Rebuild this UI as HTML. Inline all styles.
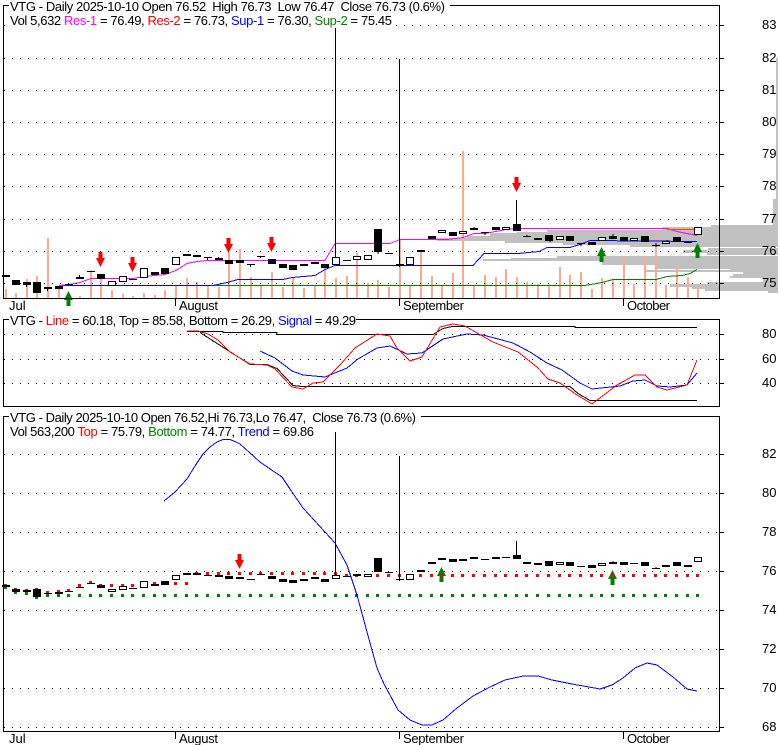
<!DOCTYPE html>
<html><head><meta charset="utf-8"><title>VTG</title>
<style>html,body{margin:0;padding:0;background:#fff}svg{display:block}text{font-family:"Liberation Sans",Arial,sans-serif;font-size:13px;fill:#000;white-space:pre}</style>
</head><body>
<svg xmlns="http://www.w3.org/2000/svg" width="780" height="745" viewBox="0 0 780 745" shape-rendering="crispEdges">
<rect width="780" height="745" fill="#fff"/>
<!-- volume profile -->
<path fill="#c0c0c0" d="M776 58h2v141h-2zM773 199h5v26h-5zM711 225h67v2h-67zM662 227h116v3H662zM547 230h231v2H547zM517 232h261v1H517zM490 233h288v3H490zM467 236h311v2H467zM437 238h341v3H437zM505 241h273v2H505zM563 243h215v2H563zM630 245h148v2H630zM708 248h70v2h-70zM683 250h95v3h-95zM707 253h71v2h-71zM557 256h221v2H557zM511 258h267v1H511zM483 259h295v2H483zM602 261h176v4H602zM657 265h121v4H657zM730 269h48v1h-48zM646 270h132v2H646zM743 272h35v2h-35zM733 274h45v2h-45zM730 276h48v2h-48zM763 278h15v4h-15zM707 282h71v2h-71zM670 284h108v3H670zM692 287h86v2h-86zM705 289h73v2h-73zM768 291h10v2h-10z"/>
<!-- volume bars -->
<path stroke="#ffaa90" stroke-width="2" fill="none" d="M6 289V298M16 293V298M27 279V298M37 276V298M48 238V298M59 286V298M80 296V298M91 270V298M101 279V298M112 290V298M123 294V298M133 296V298M144 293V298M155 295V298M165 290V298M176 286V298M187 278V298M197 282V298M208 285V298M219 287V298M229 252V298M240 249V298M251 277V298M261 285V298M272 272V298M283 287V298M293 278V298M304 288V298M315 285V298M325 267V298M336 278V298M347 276V298M357 253V298M368 283V298M378 280V298M389 287V298M400 240V298M410 286V298M421 252V298M432 276V298M442 285V298M453 273V298M463 151V298M474 285V298M485 275V298M496 277V298M506 269V298M517 277V298M527 282V298M538 284V298M549 284V298M560 267V298M570 275V298M581 272V298M592 289V298M602 278V298M613 279V298M624 257V298M634 284V298M645 256V298M656 234V298M666 285V298M677 266V298M688 277V298M698 287V298"/>
<!-- grid -->
<path stroke="#000" stroke-width="1" stroke-dasharray="1 7" fill="none" d="M4 25.5H717M4 58.5H717M4 90.5H717M4 122.5H717M4 154.5H717M4 186.5H717M4 219.5H717M4 251.5H717M4 283.5H717M4 334.5H717M4 359.5H717M4 383.5H717M4 454.5H717M4 493.5H717M4 532.5H717M4 571.5H717M4 610.5H717M4 649.5H717M4 688.5H717M4 727.5H717"/>
<path stroke="#000" stroke-width="1" fill="none" d="M720 25.5h4M720 58.5h4M720 90.5h4M720 122.5h4M720 154.5h4M720 186.5h4M720 219.5h4M720 251.5h4M720 283.5h4M720 334.5h4M720 359.5h4M720 383.5h4M720 454.5h4M720 493.5h4M720 532.5h4M720 571.5h4M720 610.5h4M720 649.5h4M720 688.5h4M720 727.5h4"/>
<!-- lines panel 1 -->
<polyline fill="none" stroke="#008000" points="59,285.500 585,285.500 602,282.5 613,279.5 656,279.5 667,276.5 682,275.5 690,273.5 697,269.5"/>
<polyline fill="none" stroke="#0000ff" points="59,285.5 213,285.5 227,282.5 238,279.5 283,279.5 292,277.5 315,275.5 325,269.5 335,265.5 473,265.5 484,253.5 518,253.5 539,251.5 547,247.5 570,247.5 580,244.5 590,240.5 697,241.5"/>
<polyline fill="none" stroke="#ff00ff" points="59,285.5 69,284.5 80,282.5 91,278.5 133,278.5 144,276.5 165,274.5 176,270.5 187,263.5 197,261.5 207,260.5 325,260.5 335,243.5 390,243.5 400,239.5 447,239.5 463,237.5 474,233.5 485,233.5 506,229.5 517,228.5 667,228.5 677,231.5 697,235.5"/>
<path stroke="#ff4000" fill="none" d="M667 229.5H694"/>
<!-- candles panel 1 -->
<path stroke="#000" fill="none" d="M26.5 285v2M47.5 289v2M79.5 275v2M207.5 258v2M218.5 257v1M250.5 265v2M260.5 257v1M335.5 28V257M378 252v2M399.5 59V267M516.5 200V224M527 235v1M550 241v1M581 244v2M485 233v2M474 227v1M613 234v2M656 243v4M667 240v1"/>
<path fill="#000" d="M2 275h8v2H2zM12 280h8v5h-8zM23 282h8v3h-8zM33 282h8v11h-8zM44 287h8v2h-8zM55 286h8v3h-8zM65 284h8v1h-8zM76 277h8v2h-8zM87 271h8v1h-8zM97 274h8v5h-8zM129 279h8v1h-8zM151 272h8v3h-8zM161 268h8v6h-8zM183 254h8v2h-8zM193 255h8v2h-8zM204 257h8v1h-8zM215 258h8v2h-8zM225 260h8v4h-8zM236 260h8v3h-8zM247 264h8v1h-8zM257 256h8v1h-8zM268 259h8v5h-8zM279 264h8v4h-8zM289 265h8v5h-8zM300 264h8v2h-8zM311 262h8v2h-8zM321 264h8v4h-8zM343 260h8v1h-8zM374 229h8v23h-8zM385 253h8v1h-8zM396 264h8v2h-8zM417 250h8v2h-8zM428 236h8v3h-8zM449 232h8v4h-8zM470 228h8v2h-8zM481 232h8v1h-8zM492 227h8v3h-8zM513 224h8v7h-8zM523 236h8v1h-8zM534 238h8v2h-8zM545 235h8v6h-8zM566 236h8v5h-8zM577 243h8v1h-8zM588 242h8v3h-8zM609 236h8v3h-8zM620 237h8v4h-8zM641 236h8v6h-8zM652 245h8v1h-8zM673 237h8v5h-8zM684 242h8v1h-8z"/>
<path fill="#fff" stroke="#000" d="M108.5 281.5h7v4h-7zM119.5 276.5h7v5h-7zM140.5 268.5h7v9h-7zM172.5 257.5h7v7h-7zM332.5 257.5h7v7h-7zM353.5 256.5h7v3h-7zM364.5 255.5h7v4h-7zM406.5 257.5h7v7h-7zM438.5 230.5h7v2h-7zM459.5 231.5h7v2h-7zM502.5 227.5h7v2h-7zM556.5 236.5h7v3h-7zM598.5 237.5h7v3h-7zM630.5 238.5h7v2h-7zM662.5 241.5h7v2h-7zM694.5 227.5h7v7h-7z"/>
<!-- arrows -->
<path fill="#ff0000" d="M98.500 252h4v6h2.500L100.500 267L96 258h2.500zM130.500 257h4v6h2.500L132.500 272L128 263h2.500zM226.500 238h4v6h2.500L228.500 253L224 244h2.500zM269.500 237h4v6h2.500L271.500 252L267 243h2.500zM514.500 177h4v6h2.500L516.500 192L512 183h2.500zM237.500 554h4v6h2.500L239.500 569L235 560h2.500z"/>
<path fill="#008000" d="M68.500 291L73 300h-2.500v6h-4v-6H64zM601.500 247L606 256h-2.500v6h-4v-6H597zM697.500 243L702 252h-2.500v6h-4v-6H693zM441.500 567L446 576h-2.500v6h-4v-6H437zM612.500 570L617 579h-2.500v6h-4v-6H608z"/>
<!-- panel 2 lines -->
<polyline fill="none" stroke="#000" points="187,331.5 223,331.5 223,332.5 277,332.500 277,334.500 433,334.500 443,328.500 452,326.500 575,326.500 575,327.500 697,327.500"/>
<polyline fill="none" stroke="#000" points="200,332.500 250,364.500 267,364.500 277,368.500 293,385.500 302,386.500 570,386.500 578,393.500 590,400.500 697,400.500"/>
<polyline fill="none" stroke="#0000ff" points="260,351 275,358 292,371 303,375 325,377 347,368 358,359 377,348 390,346 407,354 422,353 443,339 467,334 483,335 513,343 530,352 547,363 562,370 580,383 592,389 620,386 633,381 645,380 657,386 670,387 687,385 697,373"/>
<polyline fill="none" stroke="#ff0000" points="187,331 198,331 208,334 218,340 230,352 250,364 267,365 275,369 292,387 303,389 313,383 323,382 340,365 355,348 377,334 390,336 397,348 410,361 422,357 440,327 453,324 465,326 493,342 518,352 537,367 548,379 560,383 577,395 592,404 617,385 635,375 645,375 657,387 667,390 687,385 697,360"/>
<!-- panel 3 top/bottom dots -->
<path stroke="#ff0000" stroke-width="3" fill="none" d="M4 585.500h3M14 589.500h3M25 590.500h3M35 589.500h3M46 592.500h3M57 591.500h3M67 590.500h3M78 585.500h3M89 582.500h3M99 585.500h3M110 585.500h3M121 585.500h3M131 585.500h3M153 583.500h3M174 583.500h3M185 583.500h3M195 573.500h3M206 573.500h3M217 573.500h3M227 573.500h3M238 573.500h3M249 573.500h3M259 573.500h3M270 573.500h3M281 573.500h3M291 573.500h3M302 573.500h3M313 573.500h3M323 573.500h3M334 573.500h3M345 575.500h3M355 575.500h3M366 575.500h3M376 575.500h3M387 575.500h3M398 575.500h3M408 575.500h3M419 575.500h3M430 575.500h3M440 575.500h3M451 575.500h3M461 575.500h3M472 575.500h3M483 575.500h3M494 575.500h3M504 575.500h3M515 575.500h3M525 575.500h3M536 575.500h3M547 575.500h3M558 575.500h3M568 575.500h3M579 575.500h3M590 575.500h3M600 575.500h3M611 575.500h3M622 575.500h3M632 575.500h3M643 575.500h3M654 575.500h3M664 575.500h3M675 575.500h3M686 575.500h3M696 575.500h3"/>
<path stroke="#008000" stroke-width="3" fill="none" d="M4 587.500h3M14 592.500h3M25 593.500h3M35 597.500h3M46 595.500h3M57 595.500h3M67 595.500h3M78 595.500h3M89 595.500h3M99 595.500h3M110 595.500h3M121 595.500h3M131 595.500h3M142 595.500h3M153 595.500h3M163 595.500h3M174 595.500h3M185 595.500h3M195 595.500h3M206 595.500h3M217 595.500h3M227 595.500h3M238 595.500h3M249 595.500h3M259 595.500h3M270 595.500h3M281 595.500h3M291 595.500h3M302 595.500h3M313 595.500h3M323 595.500h3M334 595.500h3M345 595.500h3M355 595.500h3M366 595.500h3M376 595.500h3M387 595.500h3M398 595.500h3M408 595.500h3M419 595.500h3M430 595.500h3M440 595.500h3M451 595.500h3M461 595.500h3M472 595.500h3M483 595.500h3M494 595.500h3M504 595.500h3M515 595.500h3M525 595.500h3M536 595.500h3M547 595.500h3M558 595.500h3M568 595.500h3M579 595.500h3M590 595.500h3M600 595.500h3M611 595.500h3M622 595.500h3M632 595.500h3M643 595.500h3M654 595.500h3M664 595.500h3M675 595.500h3M686 595.500h3M696 595.500h3"/>
<!-- panel 3 candles -->
<path stroke="#000" fill="none" d="M335.500 432V575M399.500 456V581M516.500 541V555M656 567v2M613 561v1"/>
<path fill="#000" d="M2 585h8v2H2zM12 589h8v3h-8zM23 590h8v2h-8zM33 589h8v8h-8zM44 593h8v1h-8zM55 592h8v2h-8zM65 591h8v1h-8zM76 587h8v1h-8zM87 583h8v1h-8zM97 585h8v3h-8zM129 588h8v1h-8zM151 584h8v2h-8zM161 581h8v4h-8zM183 573h8v2h-8zM193 573h8v2h-8zM204 575h8v1h-8zM215 575h8v2h-8zM225 576h8v3h-8zM236 577h8v2h-8zM247 579h8v1h-8zM257 574h8v1h-8zM268 576h8v3h-8zM279 579h8v3h-8zM289 580h8v3h-8zM300 579h8v2h-8zM311 577h8v2h-8zM321 579h8v3h-8zM343 576h8v1h-8zM353 574h8v2h-8zM374 558h8v14h-8zM385 572h8v1h-8zM396 579h8v1h-8zM417 570h8v2h-8zM428 562h8v2h-8zM438 558h8v2h-8zM449 559h8v3h-8zM459 559h8v2h-8zM470 557h8v2h-8zM481 559h8v1h-8zM492 557h8v2h-8zM502 557h8v1h-8zM513 555h8v4h-8zM523 562h8v2h-8zM534 563h8v2h-8zM545 561h8v5h-8zM566 562h8v4h-8zM577 566h8v1h-8zM588 565h8v3h-8zM609 562h8v2h-8zM620 562h8v3h-8zM630 563h8v1h-8zM641 562h8v4h-8zM652 568h8v1h-8zM662 565h8v2h-8zM673 562h8v4h-8zM684 565h8v2h-8z"/>
<path fill="#fff" stroke="#000" d="M108.500 589.500h7v2h-7zM119.500 586.500h7v3h-7zM140.500 581.500h7v6h-7zM172.500 575.500h7v4h-7zM332.500 575.500h7v3h-7zM364.500 574.500h7v2h-7zM406.500 574.500h7v5h-7zM556.500 562.500h7v2h-7zM598.500 563.500h7v2h-7zM694.500 557.500h7v4h-7z"/>
<polyline fill="none" stroke="#0000ff" points="164,501 175,492 187,479 195,466 203,454 210,447 217,442 223,439.500 230,439.500 236,442 240,444 260,462 282,477 290,489 303,508 325,532 335,543 347,565 357,595 367,632 377,668 384,684 390,695 398,710 410,720 422,725 432,725 443,720 457,708 473,696 490,687 505,680 523,676 538,676 552,680 572,684 600,689 612,685 623,678 635,668 647,663 657,665 673,677 687,689 697,691"/>
<!-- frames -->
<path stroke="#000" fill="none" d="M3.500 5.500H719.500V298.500H3.500zM3.500 319.500H719.500V406.500H3.500zM3.500 416.500H719.500V731.500H3.500z"/>
<!-- month ticks -->
<path stroke="#000" fill="none" d="M175.500 298v8M399.500 298v8M623.500 298v8M175.500 731v8M399.500 731v8M623.500 731v8"/>
<!-- title backgrounds -->
<path fill="#fff" d="M9 0h441v13H9zM9 13h386v15H9zM9 313h347v15H9zM9 410h412v14H9zM9 424h306v14H9z"/>
<g shape-rendering="auto">
<text x="10" y="11" textLength="435" xml:space="preserve">VTG - Daily 2025-10-10 Open 76.52  High 76.73  Low 76.47  Close 76.73 (0.6%)</text>
<text x="10" y="25" textLength="382" xml:space="preserve">Vol 5,632 <tspan fill="#ff00ff">Res-1</tspan> = 76.49, <tspan fill="#ff0000">Res-2</tspan> = 76.73, <tspan fill="#0000ff">Sup-1</tspan> = 76.30, <tspan fill="#008000">Sup-2</tspan> = 75.45</text>
<text x="10" y="325" textLength="346" xml:space="preserve">VTG - <tspan fill="#ff0000">Line</tspan> = 60.18, Top = 85.58, Bottom = 26.29, <tspan fill="#0000ff">Signal</tspan> = 49.29</text>
<text x="10" y="422" textLength="406" xml:space="preserve">VTG - Daily 2025-10-10 Open 76.52,Hi 76.73,Lo 76.47,  Close 76.73 (0.6%)</text>
<text x="10" y="436" textLength="304" xml:space="preserve">Vol 563,200 <tspan fill="#ff0000">Top</tspan> = 75.79, <tspan fill="#008000">Bottom</tspan> = 74.77, <tspan fill="#0000ff">Trend</tspan> = 69.86</text>
<text x="9" y="310">Jul</text><text x="179" y="310" textLength="39">August</text><text x="403" y="310" textLength="61">September</text><text x="627" y="310" textLength="43">October</text>
<text x="9" y="743">Jul</text><text x="179" y="743" textLength="39">August</text><text x="403" y="743" textLength="61">September</text><text x="627" y="743" textLength="43">October</text>
<text x="762" y="29">83</text><text x="762" y="62">82</text><text x="762" y="94">81</text><text x="762" y="126">80</text><text x="762" y="158">79</text><text x="762" y="190">78</text><text x="762" y="223">77</text><text x="762" y="255">76</text><text x="762" y="287">75</text>
<text x="762" y="338">80</text><text x="762" y="363">60</text><text x="762" y="387">40</text>
<text x="762" y="458">82</text><text x="762" y="497">80</text><text x="762" y="536">78</text><text x="762" y="575">76</text><text x="762" y="614">74</text><text x="762" y="653">72</text><text x="762" y="692">70</text><text x="762" y="731">68</text>
</g>
</svg>
</body></html>
